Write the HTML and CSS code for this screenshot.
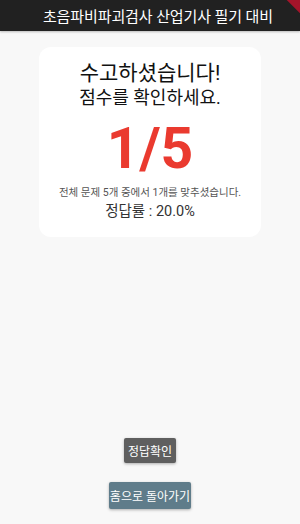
FILE: index.html
```html
<!DOCTYPE html>
<html lang="ko">
<head>
	<meta charset="UTF-8">
	<meta name="viewport" content="width=device-width, initial-scale=1.0">
	<title>결과</title>
	<link rel="stylesheet" href="styles.css">
</head>
<body>
	<header class="appbar">
		<span class="appbar-title">초음파비파괴검사 산업기사 필기 대비</span>
		<div class="debug-ribbon"></div>
	</header>

	<div class="page">
		<div class="result-card">
			<div class="msg-big">수고하셨습니다!</div>
			<div class="msg-sub">점수를 확인하세요.</div>
			<div class="score">1/5</div>
			<div class="detail">전체 문제 5개 중에서 1개를 맞추셨습니다.</div>
			<div class="rate">정답률 : 20.0%</div>
		</div>

		<div class="actions">
			<button class="btn btn-check">정답확인</button>
			<button class="btn btn-home">홈으로 돌아가기</button>
		</div>
	</div>
</body>
</html>
```
FILE: styles.css
```css
:root {
	--bar-color:		#212121;
	--bg-color:		#f8f8f8;
	--card-color:		#ffffff;
	--score-color:		#ea3a2f;
	--btn-gray:		#5f5f5f;
	--btn-blue:		#5f7c8a;
}

* {
	padding:		0;
	margin:			0;
	box-sizing:		border-box;
}

body {
	width:			300px;
	height:			524px;
	overflow:		hidden;
	background-color:	var(--bg-color);
	font-family:		Roboto, "Noto Sans CJK KR", sans-serif;
	color:			#111;
}

.appbar {
	position:		relative;
	height:			31px;
	background:		var(--bar-color);
	display:		flex;
	align-items:		center;
	justify-content:	flex-end;
	padding-right:		27px;
	overflow:		hidden;
	box-shadow:		0 1px 2px rgba(0,0,0,0.25);
}

.appbar-title {
	color:			#fff;
	font-size:		15px;
	white-space:		nowrap;
	letter-spacing:		-0.1px;
}

.debug-ribbon {
	position:		absolute;
	top:			-5px;
	right:			-20px;
	width:			50px;
	height:			11px;
	background:		#a4142a;
	transform:		rotate(45deg);
}

.page {
	display:		flex;
	flex-direction:		column;
	align-items:		center;
	padding-top:		16px;
}

.result-card {
	width:			222px;
	height:			190px;
	background:		var(--card-color);
	border-radius:		12px;
	display:		flex;
	flex-direction:		column;
	align-items:		center;
	padding-top:		13px;
}

.msg-big {
	font-size:		21px;
	line-height:		26px;
	color:			#111;
}

.msg-sub {
	font-size:		18px;
	line-height:		24px;
	color:			#111;
}

.score {
	font-size:		57px;
	font-weight:		bold;
	line-height:		70px;
	color:			var(--score-color);
	margin-top:		4px;
}

.detail {
	font-size:		10.5px;
	line-height:		14px;
	color:			#555;
	margin-top:		2px;
}

.rate {
	font-size:		14.5px;
	line-height:		20px;
	color:			#333;
	margin-top:		2px;
}

.actions {
	display:		flex;
	flex-direction:		column;
	align-items:		center;
	gap:			19px;
	margin-top:		201px;
}

.btn {
	border:			none;
	border-radius:		2px;
	color:			#fff;
	font-family:		Roboto, "Noto Sans CJK KR", sans-serif;
	font-size:		12px;
	box-shadow:		0 1px 3px rgba(0,0,0,0.3);
	cursor:			pointer;
}

.btn-check {
	width:			52px;
	height:			25px;
	background:		var(--btn-gray);
}

.btn-home {
	width:			82px;
	height:			27px;
	background:		var(--btn-blue);
}
```
